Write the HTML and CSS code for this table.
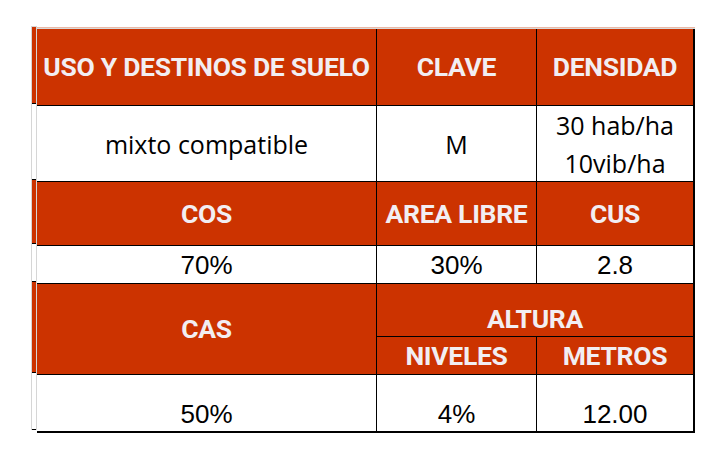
FILE: index.html
```html
<!DOCTYPE html>
<html lang="es">
<head>
<meta charset="utf-8">
<title>Tabla de uso de suelo</title>
<link rel="stylesheet" href="styles.css">
</head>
<body>
<div class="sheet">
  <div class="strip">
    <div class="seg red"></div>
    <div class="seg"></div>
    <div class="seg red"></div>
    <div class="seg"></div>
    <div class="seg red"></div>
    <div class="seg"></div>
  </div>
  <div class="main">
    <div class="grid">
      <div class="cell head">USO Y DESTINOS DE SUELO</div>
      <div class="cell head">CLAVE</div>
      <div class="cell head">DENSIDAD</div>

      <div class="cell data">mixto compatible</div>
      <div class="cell data">M</div>
      <div class="cell data two">30 hab/ha<br>10vib/ha</div>

      <div class="cell head">COS</div>
      <div class="cell head">AREA LIBRE</div>
      <div class="cell head">CUS</div>

      <div class="cell num">70%</div>
      <div class="cell num">30%</div>
      <div class="cell num">2.8</div>

      <div class="cell head cas">CAS</div>
      <div class="cell head altura">ALTURA</div>
      <div class="cell head">NIVELES</div>
      <div class="cell head">METROS</div>

      <div class="cell num bottom">50%</div>
      <div class="cell num bottom">4%</div>
      <div class="cell num bottom">12.00</div>
    </div>
  </div>
</div>
</body>
</html>
```
FILE: styles.css
```css
html, body {
  margin: 0;
  padding: 0;
  background: #ffffff;
}

.sheet {
  display: flex;
  align-items: flex-start;
  margin: 26px 0 0 31px;
}

.strip {
  width: 4px;
  display: grid;
  grid-template-rows: 76px 75px 63px 37px 90px 56px;
  row-gap: 1px;
  background: #000;
  border-top: 1px solid #d6d6d6;
  border-left: 1px solid #d6d6d6;
  border-right: 1px solid #d6d6d6;
  padding-bottom: 1px;
}

.seg {
  background: #ffffff;
}

.seg.red {
  background: #cc3300;
}

.main {
  margin-top: 1px;
  border-top: 1px solid #ebb9a6;
}

.grid {
  display: grid;
  grid-template-columns: 339px 159px 156px;
  grid-template-rows: 76px 75px 63px 37px 52px 37px 56px;
  gap: 1px;
  background: #000;
  border-top: 1px solid #d9d9d9;
  padding: 0 2px 2px 0;
}

.cell {
  display: flex;
  align-items: center;
  justify-content: center;
  text-align: center;
  line-height: 30px;
}

.head {
  background: #cc3300;
  color: #f2eef2;
  font-family: Roboto, "Liberation Sans", sans-serif;
  font-weight: 700;
  font-size: 26.5px;
  letter-spacing: -0.3px;
}

.data {
  background: #ffffff;
  color: #000;
  font-family: "Open Sans", "Liberation Sans", sans-serif;
  font-size: 25px;
}

.data.two {
  line-height: 38px;
}

.num {
  background: #ffffff;
  color: #000;
  font-family: "Liberation Sans", Arial, sans-serif;
  font-size: 26px;
}

.num.bottom {
  align-items: flex-end;
  padding-bottom: 2px;
}

.cas {
  grid-column: 1;
  grid-row: 5 / 7;
}

.altura {
  grid-column: 2 / 4;
  grid-row: 5;
  align-items: flex-end;
  padding-bottom: 2px;
}
```
